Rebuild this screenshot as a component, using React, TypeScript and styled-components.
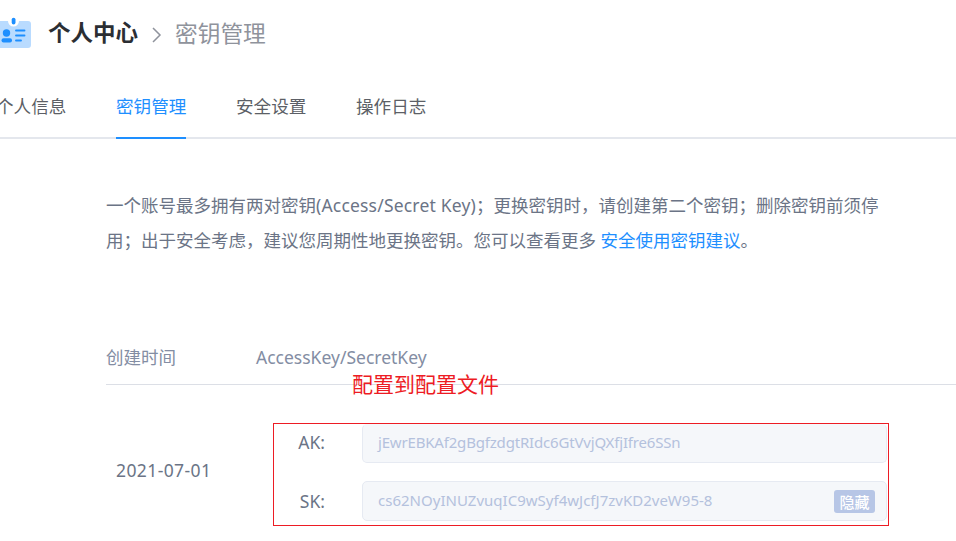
import React from "react";
import styled, { createGlobalStyle } from "styled-components";

const Global = createGlobalStyle`
  * { box-sizing: border-box; }
  html, body { margin: 0; background: #fff; overflow: hidden; }
  body { font-family: "Noto Sans", "Noto Sans CJK SC", sans-serif; }
`;

const Page = styled.main`
  width: 956px;
  height: 541px;
  overflow: hidden;
  background: #fff;
  display: flex;
  flex-direction: column;
`;

const Header = styled.header`
  display: flex;
  align-items: center;
  height: 67px;
`;

const BadgeIcon = styled.svg`
  width: 32px;
  height: 32px;
  margin-top: -2px;
  flex: none;
`;

const Title = styled.h1`
  margin: -2px 0 0 16px;
  font-size: 22.5px;
  line-height: 34px;
  font-weight: 700;
  color: #2b2e33;
`;

const Chevron = styled.svg`
  width: 12px;
  height: 16px;
  margin: 2px 12px 0 13px;
`;

const Crumb = styled.span`
  font-size: 22.7px;
  line-height: 34px;
  color: #8f939c;
`;

const Tabs = styled.nav`
  display: flex;
  gap: 50px;
  height: 72px;
  padding-top: 16px;
  margin-left: -4px;
  border-bottom: 2px solid #e4e7ed;
`;

const Tab = styled.a<{ $active?: boolean }>`
  height: 56px;
  line-height: 46px;
  font-size: 17.6px;
  width: 70px;
  white-space: nowrap;
  color: ${(p) => (p.$active ? "#1e8fff" : "#5c5f66")};
  border-bottom: 2px solid ${(p) => (p.$active ? "#1e8fff" : "transparent")};
`;

const Content = styled.section`
  padding-left: 106px;
  display: flex;
  flex-direction: column;
`;

const Notice = styled.p`
  margin: 49px 0 0;
  font-size: 17.5px;
  line-height: 35px;
  color: #6b7486;
  white-space: nowrap;
`;

const Latin = styled.span<{ $spacing?: number }>`
  letter-spacing: ${(p) => p.$spacing ?? 0}px;
`;

const Link = styled.a`
  color: #1e8fff;
`;

const TableHead = styled.div`
  display: grid;
  grid-template-columns: 150px 1fr;
  height: 54px;
  margin-top: 73px;
  line-height: 53px;
  font-size: 17.5px;
  color: #838da3;
  border-bottom: 1px solid #dcdfe6;
`;

const Annotation = styled.div`
  position: absolute;
  left: 352px;
  top: 369px;
  font-size: 21px;
  line-height: 30px;
  color: #ed1c24;
  white-space: nowrap;
`;

const Row = styled.div`
  display: grid;
  grid-template-columns: 167px 616px;
  align-items: center;
  margin-top: 38px;
`;

const DateCell = styled.time`
  padding-left: 10px;
  margin-top: -10px;
  font-size: 17.5px;
  letter-spacing: 0.4px;
  color: #6b7486;
`;

const Keys = styled.div`
  height: 103px;
  border: 1px solid #ed1c24;
  display: flex;
  flex-direction: column;
  gap: 18px;
`;

const KeyLine = styled.div<{ $first?: boolean }>`
  display: grid;
  grid-template-columns: 88px 525px;
  height: ${(p) => (p.$first ? 39 : 40)}px;
  line-height: ${(p) => (p.$first ? 34 : 37)}px;
`;

const KeyLabel = styled.label<{ $top?: number }>`
  padding-right: 37px;
  padding-top: ${(p) => p.$top ?? 1}px;
  text-align: right;
  font-size: 17.5px;
  color: #6b7486;
`;

const KeyField = styled.div<{ $clipped?: boolean }>`
  display: flex;
  justify-content: space-between;
  height: 100%;
  padding: 0 11px 0 15px;
  border: 1px solid #e6eaf2;
  border-top-color: ${(p) => (p.$clipped ? "#f5f7fa" : "#e6eaf2")};
  border-radius: 5px;
  background: #f5f7fa;
  font-size: 15px;
  color: #b4c1dd;
`;

const HideButton = styled.button`
  align-self: center;
  width: 41px;
  height: 23px;
  padding: 0;
  border: 0;
  border-radius: 3px;
  background: #b7c6e6;
  color: #fff;
  font: 500 15px/23px "Noto Sans CJK SC", sans-serif;
`;

const tabs = ["个人信息", "密钥管理", "安全设置", "操作日志"];

export default function App() {
  return (
    <Page>
      <Global />
      <Header>
        <BadgeIcon viewBox="0 0 32 32">
          <path d="M0 4h8a5.500 5.500 0 0 0 11 0h9a3 3 0 0 1 3 3v21a3 3 0 0 1-3 3H0z" fill="#b9dbff" />
          <rect x="11.700" y="0.700" width="3.800" height="6.800" rx="1.900" fill="#1e8fff" />
          <circle cx="6.500" cy="16" r="3.700" fill="#1e8fff" />
          <rect x="1.500" y="21.300" width="10.500" height="4.200" rx="2" fill="#1e8fff" />
          <path d="M16 13.500h8.500M16 18.500h8.500M16 23.500h5" stroke="#1e8fff" strokeWidth="1.900" strokeLinecap="round" />
        </BadgeIcon>
        <Title>个人中心</Title>
        <Chevron viewBox="0 0 12 16">
          <path d="M2 1l7 7-7 7" fill="none" stroke="#8f939c" strokeWidth="1.500" />
        </Chevron>
        <Crumb>密钥管理</Crumb>
      </Header>
      <Tabs>
        {tabs.map((t) => (
          <Tab key={t} $active={t === "密钥管理"}>{t}</Tab>
        ))}
      </Tabs>
      <Content>
        <Notice>
          一个账号最多拥有两对密钥<Latin $spacing={0.19}>(Access/Secret Key)</Latin>；更换密钥时，请创建第二个密钥；删除密钥前须停
          <br />
          用；出于安全考虑，建议您周期性地更换密钥。您可以查看更多 <Link>安全使用密钥建议</Link>。
        </Notice>
        <TableHead>
          <span>创建时间</span>
          <Latin>AccessKey/SecretKey</Latin>
        </TableHead>
        <Row>
          <DateCell>2021-07-01</DateCell>
          <Keys>
            <KeyLine $first>
              <KeyLabel>AK:</KeyLabel>
              <KeyField $clipped><Latin $spacing={-0.18}>jEwrEBKAf2gBgfzdgtRIdc6GtVvjQXfjIfre6SSn</Latin></KeyField>
            </KeyLine>
            <KeyLine>
              <KeyLabel $top={2}>SK:</KeyLabel>
              <KeyField>
                <Latin $spacing={0.01}>cs62NOyINUZvuqIC9wSyf4wJcfJ7zvKD2veW95-8</Latin>
                <HideButton>隐藏</HideButton>
              </KeyField>
            </KeyLine>
          </Keys>
        </Row>
      </Content>
      <Annotation>配置到配置文件</Annotation>
    </Page>
  );
}
